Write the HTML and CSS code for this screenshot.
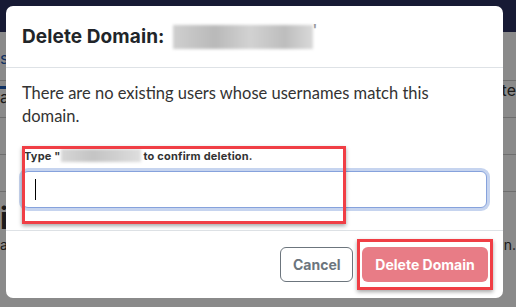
FILE: index.html
```html
<!DOCTYPE html>
<html lang="en">
<head>
<meta charset="UTF-8">
<meta name="viewport" content="width=device-width, initial-scale=1.0">
<title>Delete Domain</title>
<link rel="stylesheet" href="styles.css">
</head>
<body>

<!-- page behind the dialog -->
<div class="page">
  <div class="topbar"></div>
  <div class="tabs"><span class="tab-active">s</span><span class="tab-right">te</span></div>
  <div class="page-row">a</div>
  <div class="page-row"></div>
  <div class="page-row"></div>
  <div class="page-big">i</div>
  <div class="page-foot"><span>a</span><span>n.</span></div>
</div>

<div class="backdrop"></div>

<div class="modal">
  <div class="modal-header">
    <h5>Delete Domain: <span class="blur blur-title"></span><span class="tick">'</span></h5>
  </div>
  <div class="modal-body">
    <p>There are no existing users whose usernames match this domain.</p>
    <label for="confirm">Type "<span class="blur blur-label"></span> to confirm deletion.</label>
    <div class="input-wrap">
      <input type="text" id="confirm">
      <span class="caret"></span>
    </div>
  </div>
  <div class="modal-footer">
    <button class="btn-cancel">Cancel</button>
    <button class="btn-delete" disabled>Delete Domain</button>
  </div>

  <div class="mark mark-input"></div>
  <div class="mark mark-button"></div>
</div>

</body>
</html>
```

FILE: styles.css
```css
body {
  margin: 0;
  font-family: Inter, "Noto Sans", Arial, sans-serif;
  background-color: #fff;
  width: 516px;
  height: 307px;
  overflow: hidden;
}

/* page under the overlay */
.page {
  width: 516px;
  height: 307px;
  color: #333;
}
.topbar {
  height: 32px;
  background-color: #2c3060;
}
.tabs {
  height: 48px;
  display: flex;
  justify-content: space-between;
  border-bottom: 1px solid #ccc;
  font-size: 16px;
}
.tab-active {
  align-self: flex-start;
  color: #1d5cb8;
  border-bottom: 3px solid #1d5cb8;
  padding: 16px 12px 18px 0;
  margin-top: 0;
}
.tab-right {
  align-self: flex-end;
  margin-bottom: -20px;
}
.page-row {
  height: 30px;
  border-bottom: 1px solid #ccc;
  padding-top: 6px;
  font-size: 16px;
}
.page-row:first-of-type {
  height: 64px;
}
.page-big {
  padding-top: 8px;
  font-size: 30px;
  font-weight: bold;
}
.page-foot {
  display: flex;
  justify-content: space-between;
  font-size: 14px;
}

.backdrop {
  position: fixed;
  inset: 0;
  background-color: rgba(0, 0, 0, 0.46);
}

/* dialog */
.modal {
  position: absolute;
  left: 6px;
  top: 6px;
  width: 497px;
  height: 292px;
  background-color: #fff;
  border-radius: 7px;
  display: flex;
  flex-direction: column;
  color: #212529;
}

.modal-header {
  height: 61px;
  padding: 0 16px;
  display: flex;
  align-items: center;
  border-bottom: 1px solid #dee2e6;
}
.modal-header h5 {
  margin: 0;
  font-size: 19px;
  font-weight: 700;
  display: flex;
  align-items: center;
  letter-spacing: 0.1px;
}

.blur {
  display: inline-block;
  background: linear-gradient(90deg, #cfcfcf, #b9b9b9 30%, #d2d2d2 55%, #bdbdbd 80%, #d9d9d9);
  filter: blur(1.5px);
}
.blur-title {
  width: 140px;
  height: 24px;
  margin-left: 8px;
}
.tick {
  color: #999;
  font-size: 14px;
  align-self: flex-start;
  margin-top: -4px;
}
.blur-label {
  width: 80px;
  height: 13px;
  vertical-align: -2px;
  background: linear-gradient(90deg, #d6d6d6, #c4c4c4 40%, #d0d0d0 70%, #dedede);
}

.modal-body {
  flex: 1;
  padding: 14px 16px 0 16px;
  border-bottom: 1px solid #dee2e6;
}
.modal-body p {
  margin: 0 0 21px 0;
  font-family: Lato, Inter, sans-serif;
  font-size: 16.5px;
  line-height: 23px;
  color: #333;
}
.modal-body label {
  display: block;
  font-size: 11px;
  font-weight: 700;
  color: #333;
  margin-bottom: 8px;
  padding-left: 2px;
  letter-spacing: 0.2px;
}

.input-wrap {
  position: relative;
}
.input-wrap input {
  display: block;
  box-sizing: border-box;
  width: 465px;
  height: 37px;
  border: 1px solid #86a2dc;
  border-radius: 6px;
  box-shadow: 0 0 0 3px #c6d4ef;
  outline: none;
  font-size: 16px;
}
.caret {
  position: absolute;
  left: 13px;
  top: 8px;
  width: 1px;
  height: 21px;
  background-color: #000;
}

.modal-footer {
  height: 67px;
  padding: 0 15px;
  display: flex;
  justify-content: flex-end;
  align-items: center;
  gap: 9px;
}
.modal-footer button {
  height: 35px;
  border-radius: 6px;
  font-family: inherit;
  font-size: 14px;
  font-weight: 700;
  padding: 0 12px;
}
.btn-cancel {
  width: 73px;
  background-color: #fff;
  color: #6c757d;
  border: 1px solid #6c757d;
}
.btn-delete {
  width: 126px;
  background-color: #e87c86;
  color: #fff;
  border: none;
}

/* red annotation boxes */
.mark {
  position: absolute;
  border: 3px solid #f03e45;
  box-shadow: 0 2px 4px rgba(0, 0, 0, 0.35);
}
.mark-input {
  left: 16px;
  top: 140px;
  width: 318px;
  height: 72px;
}
.mark-button {
  left: 351px;
  top: 233px;
  width: 130px;
  height: 45px;
}
```
